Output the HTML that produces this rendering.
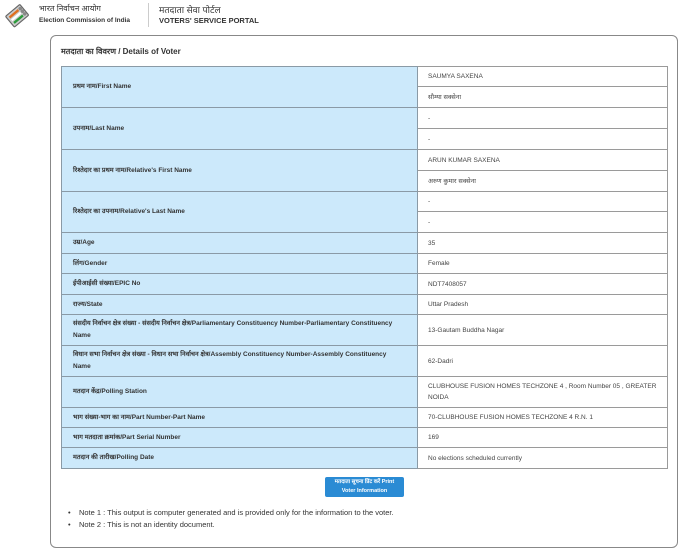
<!DOCTYPE html>
<html><head><meta charset="utf-8"><style>
body{margin:0;width:681px;height:553px;background:#fff;font-family:"Liberation Sans","Noto Sans CJK SC",sans-serif;position:relative;overflow:hidden;color:#222}
.a{position:absolute}
.l{position:absolute;left:61px;width:357px;background:#cce9fb;border:1px solid #8a9aa6;box-sizing:border-box;font-size:6.5px;font-weight:bold;color:#333;display:flex;align-items:center;padding-left:11px;padding-right:20px;line-height:12px}
.r{position:absolute;left:418px;width:250px;border:1px solid #9a9a9a;border-left:none;box-sizing:border-box;font-size:6.5px;color:#444;display:flex;align-items:center;padding-left:10px;line-height:11px}
</style></head><body>
<svg class="a" style="left:3px;top:1px" width="30" height="28" viewBox="0 0 24 24">
<g transform="rotate(-40 12 12)"><rect x="3" y="6" width="16" height="12" rx="1" fill="#ccc" stroke="#666" stroke-width="1"/>
<rect x="5" y="8" width="10" height="2" fill="#e07020"/><rect x="5" y="11" width="10" height="2" fill="#fff"/><rect x="5" y="14" width="10" height="2" fill="#2a9a3a"/>
<circle cx="17" cy="9" r="1.5" fill="#888"/><circle cx="17" cy="12" r="1.5" fill="#888"/><circle cx="17" cy="15" r="1.5" fill="#888"/></g></svg>
<div class="a" style="left:39px;top:3px;font-size:8px;color:#333">भारत निर्वाचन आयोग</div>
<div class="a" style="left:39px;top:17px;font-size:6.5px;font-weight:bold;color:#333">Election Commission of India</div>
<div class="a" style="left:148px;top:3px;width:1px;height:24px;background:#ccc"></div>
<div class="a" style="left:159px;top:3px;font-size:9px;color:#333">मतदाता सेवा पोर्टल</div>
<div class="a" style="left:159px;top:16px;font-size:7.5px;font-weight:bold;color:#333">VOTERS' SERVICE PORTAL</div>
<div class="a" style="left:50px;top:35px;width:628px;height:513px;border:1px solid #888;border-radius:6px;box-sizing:border-box"></div>
<div class="a" style="left:61px;top:46px;font-size:8px;font-weight:bold;color:#333">मतदाता का विवरण / Details of Voter</div>

<div class="l" style="top:66px;height:42px">प्रथम नाम/First Name</div>
<div class="r" style="top:66px;height:21px;border-top:1px solid #9a9a9a">SAUMYA SAXENA</div>
<div class="r" style="top:86px;height:22px">सौम्या सक्सेना</div>
<div class="l" style="top:107px;height:43px">उपनाम/Last Name</div>
<div class="r" style="top:107px;height:22px">-</div>
<div class="r" style="top:128px;height:22px">-</div>
<div class="l" style="top:149px;height:43px">रिश्तेदार का प्रथम नाम/Relative's First Name</div>
<div class="r" style="top:149px;height:22px">ARUN KUMAR SAXENA</div>
<div class="r" style="top:170px;height:22px">अरुण कुमार सक्सेना</div>
<div class="l" style="top:191px;height:42px">रिश्तेदार का उपनाम/Relative's Last Name</div>
<div class="r" style="top:191px;height:21px">-</div>
<div class="r" style="top:211px;height:22px">-</div>
<div class="l" style="top:232px;height:22px">उम्र/Age</div><div class="r" style="top:232px;height:22px">35</div>
<div class="l" style="top:253px;height:21px">लिंग/Gender</div><div class="r" style="top:253px;height:21px">Female</div>
<div class="l" style="top:273px;height:22px">ईपीआईसी संख्या/EPIC No</div><div class="r" style="top:273px;height:22px">NDT7408057</div>
<div class="l" style="top:294px;height:21px">राज्य/State</div><div class="r" style="top:294px;height:21px">Uttar Pradesh</div>
<div class="l" style="top:314px;height:32px">संसदीय निर्वाचन क्षेत्र संख्या - संसदीय निर्वाचन क्षेत्र/Parliamentary Constituency Number-Parliamentary Constituency Name</div><div class="r" style="top:314px;height:32px">13-Gautam Buddha Nagar</div>
<div class="l" style="top:345px;height:32px">विधान सभा निर्वाचन क्षेत्र संख्या - विधान सभा निर्वाचन क्षेत्र/Assembly Constituency Number-Assembly Constituency Name</div><div class="r" style="top:345px;height:32px">62-Dadri</div>
<div class="l" style="top:376px;height:32px">मतदान केंद्र/Polling Station</div><div class="r" style="top:376px;height:32px">CLUBHOUSE FUSION HOMES TECHZONE 4 , Room Number 05 , GREATER NOIDA</div>
<div class="l" style="top:407px;height:21px">भाग संख्या-भाग का नाम/Part Number-Part Name</div><div class="r" style="top:407px;height:21px">70-CLUBHOUSE FUSION HOMES TECHZONE 4 R.N. 1</div>
<div class="l" style="top:427px;height:21px">भाग मतदाता क्रमांक/Part Serial Number</div><div class="r" style="top:427px;height:21px">169</div>
<div class="l" style="top:447px;height:22px">मतदान की तारीख/Polling Date</div><div class="r" style="top:447px;height:22px">No elections scheduled currently</div>

<div class="a" style="left:325px;top:477px;width:79px;height:20px;background:#2a8bd4;border-radius:2px;color:#fff;font-size:5.5px;font-weight:bold;text-align:center;line-height:9px;padding-top:1px;box-sizing:border-box">मतदाता सूचना प्रिंट करें Print<br>Voter Information</div>
<div class="a" style="left:68px;top:507px;font-size:7.5px;color:#333;line-height:12px">
<div>•&nbsp;&nbsp;&nbsp;&nbsp;Note 1 : This output is computer generated and is provided only for the information to the voter.</div>
<div>•&nbsp;&nbsp;&nbsp;&nbsp;Note 2 : This is not an identity document.</div></div>
</body></html>
